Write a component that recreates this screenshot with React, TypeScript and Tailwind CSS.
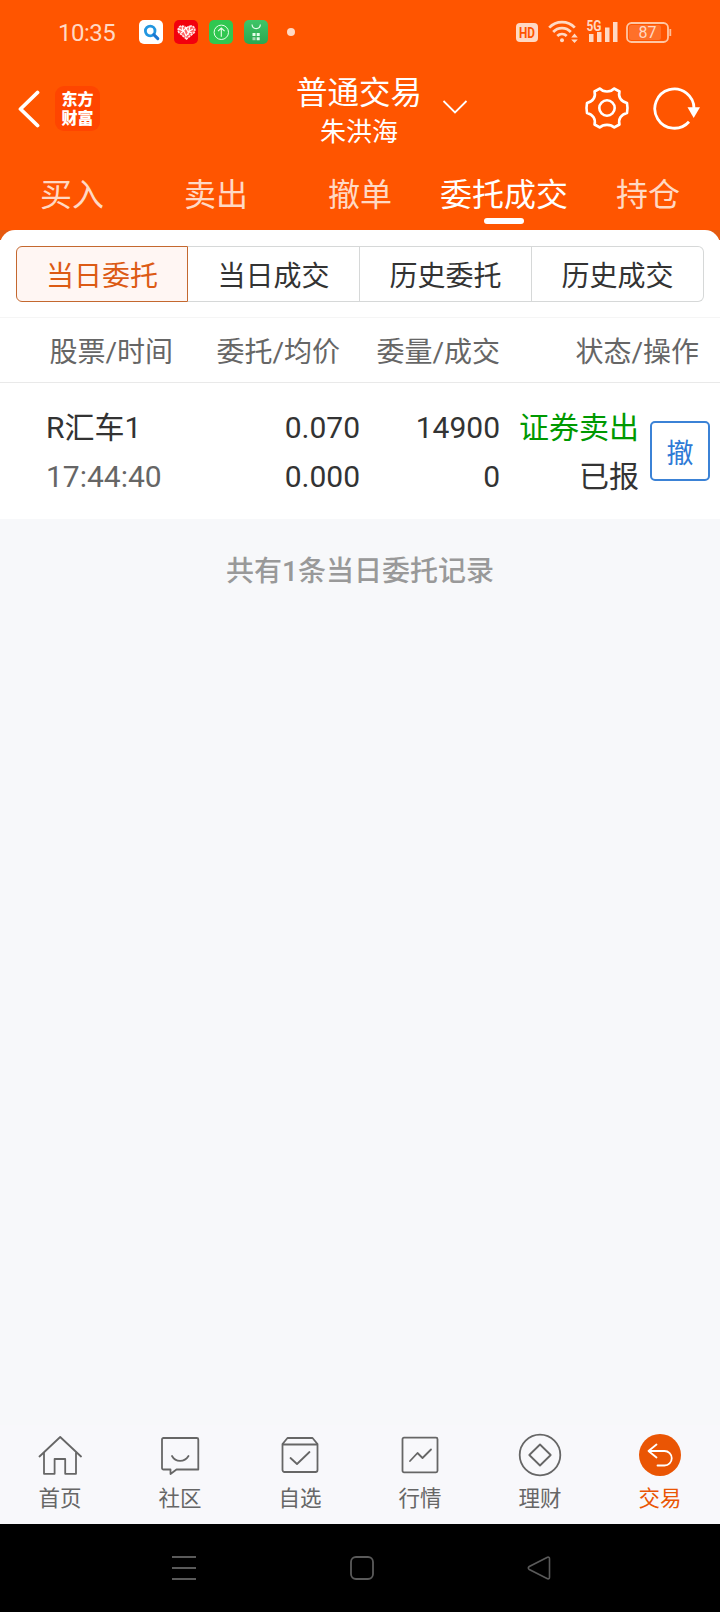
import { useState } from 'react';
import type { ReactNode } from 'react';
import clsx from 'clsx';

interface Order {
  name: string;
  time: string;
  price: string;
  avgPrice: string;
  amount: string;
  dealt: string;
  side: string;
  status: string;
}

const tabs = ['买入', '卖出', '撤单', '委托成交', '持仓'];
const segments = ['当日委托', '当日成交', '历史委托', '历史成交'];

const orders: Order[] = [
  {
    name: 'R汇车1',
    time: '17:44:40',
    price: '0.070',
    avgPrice: '0.000',
    amount: '14900',
    dealt: '0',
    side: '证券卖出',
    status: '已报'
  }
];

// 状态栏
const StatusBar = () => (
  <div className="flex h-16 items-center pl-[58px] pr-12 text-[#ffd9c4]">
    <span className="w-[81px] pt-0.5 text-[24px] leading-none tracking-[-0.5px]">10:35</span>
    <div className="flex items-center gap-[11px]">
      <svg className="size-6" viewBox="0 0 24 24" fill="none">
        <rect width="24" height="24" rx="5" fill="#fff" />
        <circle cx="11.2" cy="11" r="4.8" stroke="#2196e0" strokeWidth="2.8" />
        <path d="M14.8 14.6l4 4" stroke="#1b77d2" strokeWidth="3" strokeLinecap="round" />
      </svg>
      <svg className="size-6" viewBox="0 0 24 24" fill="none">
        <rect width="24" height="24" rx="5" fill="#f2000d" />
        <path
          d="M12.5 19L5 12.6C3 9.8 4.8 6 8 6c2 0 3.5 1 4.5 2.6C13.4 7 15 6 17 6c3.2 0 5 3.8 3 6.6z"
          fill="#f66"
          stroke="#ffe9e9"
          strokeWidth="1.6"
          strokeDasharray="2.4 .7"
        />
        <path d="M5 9l4 2 3-3 2 4 5-3M7 13l3-2 2 5 3-4 3 1M8 6l1 6M16 6l-2 9" stroke="#fff" strokeWidth="1.1" />
      </svg>
      <svg className="size-6" viewBox="0 0 24 24" fill="none" stroke="#eaffea">
        <rect width="24" height="24" rx="5" fill="#30c750" stroke="none" />
        <circle cx="12.3" cy="12.3" r="7.2" strokeWidth="1" />
        <path d="M12.3 16.8V8M9 11.2L12.3 8l3.3 3.2" strokeWidth="1.1" />
      </svg>
      <svg className="size-6" viewBox="0 0 24 24" fill="none">
        <defs>
          <linearGradient id="market" x1="0" y1="0" x2="0" y2="1">
            <stop stopColor="#3fc668" />
            <stop offset="1" stopColor="#2aa750" />
          </linearGradient>
        </defs>
        <rect width="24" height="24" rx="5" fill="url(#market)" />
        <path d="M8 4.5c.6 5.5 7.8 5.5 8.4 0" stroke="#e4ffe9" strokeWidth="1.2" />
        <path d="M8.5 13h3v3h-3zM12.7 13h3v3h-3zM12.7 17.2h3v3h-3z" fill="#e4ffe9" />
        <path d="M8.5 17.2h3v3h-3z" fill="#a9dcb6" />
      </svg>
    </div>
    <span className="ml-[19px] size-2 rounded-full bg-[#ffd9c4]" />

    <div className="ml-auto flex items-center">
      <svg className="h-7 w-[22px]" viewBox="0 -2 22 28">
        <rect y="3" width="22" height="19" rx="4" fill="#ffd9c4" />
        <text
          x="3"
          y="18"
          fontSize="15.5"
          fontWeight="700"
          fill="#ff5500"
          textLength="16"
          lengthAdjust="spacingAndGlyphs"
          fontFamily="Roboto, sans-serif"
        >
          HD
        </text>
      </svg>
      <svg className="ml-[10px] h-6 w-[30px]" viewBox="0 0 30 24" fill="none" stroke="#ffd9c4" strokeWidth="2.7">
        <path d="M1.2 7.7a17.5 17.5 0 0 1 25.6 0M5.2 12a12 12 0 0 1 17.6 0M9.3 16a6.5 6.5 0 0 1 9.4 0" />
        <circle cx="14" cy="20.3" r="2" fill="#ffd9c4" stroke="none" />
        <path d="M26.5 13.5l3.3 4h-6.6zM26.5 23l-3.3-3.5h6.6z" fill="#ffd9c4" stroke="none" />
      </svg>
      <svg className="ml-2 h-9 w-[33px]" viewBox="0 -6 33 36" fill="#ffd9c4">
        <text
          x="0.5"
          y="11"
          fontSize="14"
          fontWeight="700"
          textLength="15"
          lengthAdjust="spacingAndGlyphs"
          fontFamily="Roboto, sans-serif"
        >
          5G
        </text>
        <path d="M3 14h4.5v8H3zM11 12h4.5v10H11zM19 7.5h4.5V22H19zM27 2h4.5v20H27z" />
      </svg>
      <svg className="ml-[7px] h-6 w-[46px]" viewBox="0 0 46 24" fill="none">
        <rect x="1" y="3" width="41" height="19" rx="4.5" stroke="#ffc6a3" strokeWidth="1.8" />
        <rect x="3" y="5" width="32" height="15" rx="2.5" fill="#ff7029" />
        <path d="M44.3 9v7" stroke="#ffbe97" strokeWidth="1.8" />
        <text x="21.5" y="18" textAnchor="middle" fontSize="16" fill="#ffd9c4" fontFamily="Roboto, sans-serif">
          87
        </text>
      </svg>
    </div>
  </div>
);

// 标题栏
const TitleBar = () => (
  <div className="grid h-[88px] grid-cols-[1fr_auto_1fr] items-center pl-[17px] pr-[19px] text-white">
    <div className="flex items-center gap-[15px] pt-px">
      <svg className="h-10 w-[23px]" viewBox="0 0 23 40" fill="none" stroke="currentColor" strokeWidth="3.8">
        <path d="M20.5 3.5L3.5 20l17 16.5" strokeLinecap="round" strokeLinejoin="round" />
      </svg>
      <div className="flex size-[45px] flex-col items-center justify-center rounded-[9px] bg-[#ff4500] text-[16px] font-black leading-[19px]">
        <span>东方</span>
        <span>财富</span>
      </div>
    </div>
    <div className="pt-2 text-center">
      <div className="relative text-[31.5px] leading-10">
        普通交易
        <svg
          className="absolute left-[146px] top-[25px] h-4 w-[26px]"
          viewBox="0 0 26 16"
          fill="none"
          stroke="currentColor"
          strokeWidth="1.8"
        >
          <path d="M1.5 2L13 13.5 24.5 2" />
        </svg>
      </div>
      <div className="text-[26px] leading-9">朱洪海</div>
    </div>
    <div className="flex items-center justify-end gap-[23px]">
      <svg className="h-11 w-[46px]" viewBox="0 0 46 44" fill="none" stroke="currentColor" strokeWidth="2.6">
        <path
          d="M16 2.5C19 6.5 27 6.5 30 2.5L35.5 5.5C34 11 37 15.5 43 17Q44 22 43 27C37 28.5 34 33 35.5 38.5L30 41.5C27 38 19 38 16 41.5L10.5 38.5C12 33 9 28.5 3 27Q2 22 3 17C9 15.5 12 11 10.5 5.5Z"
          strokeLinejoin="round"
        />
        <circle cx="23" cy="22" r="7.7" />
      </svg>
      <svg className="h-11 w-12" viewBox="0 0 48 44" fill="none" stroke="currentColor" strokeWidth="2.8">
        <path d="M36 35.7A19.6 19.6 0 1 1 41 23" />
        <path d="M34.5 21.3H47L40.7 32z" fill="currentColor" stroke="none" />
      </svg>
    </div>
  </div>
);

interface NavIconProps {
  children: ReactNode;
}

const NavIcon = ({ children }: NavIconProps) => (
  <svg
    className="size-11"
    viewBox="0 0 44 44"
    fill="none"
    stroke="currentColor"
    strokeWidth="1.8"
    strokeLinejoin="round"
    strokeLinecap="round"
  >
    {children}
  </svg>
);

const navItems = [
  {
    label: '首页',
    icon: (
      <NavIcon>
        <path d="M1.5 23.5L22.2 4 43 23.5M6 19.5V40.8h10.6V26h10.6v14.8H38V19.5" />
      </NavIcon>
    )
  },
  {
    label: '社区',
    icon: (
      <NavIcon>
        <path d="M5.5 5h33.3a1.5 1.5 0 0 1 1.5 1.5V36.5H18.5L12.5 41v-4.5H5.5a1.5 1.5 0 0 1-1.5-1.5V6.5A1.5 1.5 0 0 1 5.5 5zM14 23c3.5 6.5 12.5 6.5 16.5 0" />
      </NavIcon>
    )
  },
  {
    label: '自选',
    icon: (
      <NavIcon>
        <path d="M4.5 11L9.5 5H34.5l5 6V37a2 2 0 0 1-2 2h-31a2 2 0 0 1-2-2zM4.5 11.5h35M12.5 25l6.500 6 12.5-12" />
      </NavIcon>
    )
  },
  {
    label: '行情',
    icon: (
      <NavIcon>
        <rect x="4.5" y="4.7" width="35" height="34.6" rx="1.5" />
        <path d="M12 28l7.5-8 5 5L33 16.5" />
      </NavIcon>
    )
  },
  {
    label: '理财',
    icon: (
      <NavIcon>
        <circle cx="22" cy="22" r="20.3" />
        <path d="M22 11.5L32.7 22 22 32.5 11.3 22z" />
      </NavIcon>
    )
  },
  {
    label: '交易',
    icon: (
      <NavIcon>
        <circle cx="22" cy="22" r="21" fill="#ea5504" stroke="none" />
        <path d="M18.5 11.5L10.5 18l8 6.5M11 18h15.5a7 7 0 0 1 0 14.5H19.5" stroke="#fff" />
      </NavIcon>
    )
  }
];

// 系统导航键
const SystemKeys = () => (
  <div className="flex h-[88px] items-center gap-[154px] bg-black pl-[172px] text-[#5a5a5a]">
    <svg className="size-6" viewBox="0 0 24 24" stroke="currentColor" strokeWidth="1.8">
      <path d="M0 1h24M0 12h24M0 23h24" />
    </svg>
    <svg className="size-6" viewBox="0 0 24 24" fill="none" stroke="currentColor" strokeWidth="1.8">
      <rect x="1" y="1" width="22" height="22" rx="5" />
    </svg>
    <svg className="-ml-px size-6" viewBox="0 0 24 24" fill="none" stroke="currentColor" strokeWidth="1.6">
      <path d="M20.5 1.2L2.3 10.5q-2 1.5 0 3L20.5 22.8q2 .5 2-1.5V2.7q0-2-2-1.5z" />
    </svg>
  </div>
);

const App = () => {
  const [activeTab, setActiveTab] = useState(3);
  const [activeSegment, setActiveSegment] = useState(0);

  return (
    <div className="flex h-[1612px] w-[720px] flex-col overflow-hidden bg-[#f7f8fa] font-[Roboto,'Noto_Sans_CJK_SC',sans-serif] text-[#333]">
      <header className="bg-[#ff5500]">
        <StatusBar />
        <TitleBar />
        <nav className="grid h-[78px] grid-cols-5">
          {tabs.map((tab, i) => (
            <button
              key={tab}
              onClick={() => setActiveTab(i)}
              className={clsx(
                'flex flex-col items-center whitespace-nowrap pt-[23px] text-[32px] leading-10',
                i === activeTab ? 'text-white' : 'text-[#ffd9c4]'
              )}
            >
              {tab}
              {i === activeTab && <span className="mt-[3px] h-[6px] w-10 rounded-[3px] bg-white" />}
            </button>
          ))}
        </nav>
      </header>

      <main className="flex-1">
        <div className="bg-[linear-gradient(#e5590f_10px,#fff_10px)]">
          <div className="rounded-t-[15px] bg-white px-4 pb-[15px] pt-4">
            <div className="grid h-14 grid-cols-4">
              {segments.map((segment, i) => (
                <button
                  key={segment}
                  onClick={() => setActiveSegment(i)}
                  className={clsx(
                    'border pt-1.5 text-[28px] leading-none first:rounded-l-[6px] last:rounded-r-[6px]',
                    i === activeSegment ? 'border-[#c4682f] bg-[#fff6f3] text-[#dc5a14]' : 'border-[#d6d8d8]',
                    i !== activeSegment && i > 0 && 'border-l-0'
                  )}
                >
                  {segment}
                </button>
              ))}
            </div>
          </div>
        </div>

        <div className="grid h-[66px] grid-cols-[173px_167px_160px_199px] items-center border-y border-t-[#f5f5f5] border-b-[#e9e9e9] bg-white pt-1.5 text-right text-[28px] text-[#666]">
          <span>股票/时间</span>
          <span>委托/均价</span>
          <span>委量/成交</span>
          <span>状态/操作</span>
        </div>

        {orders.map(order => (
          <div
            key={order.time}
            className="flex h-[136px] items-center bg-white pl-[46px] pr-[10px] pt-0.5 text-[30px] leading-[49px]"
          >
            <div className="w-[174px]">
              <div>{order.name}</div>
              <div className="text-[#666]">{order.time}</div>
            </div>
            <div className="w-[140px] text-right">
              <div>{order.price}</div>
              <div>{order.avgPrice}</div>
            </div>
            <div className="w-[140px] text-right">
              <div>{order.amount}</div>
              <div>{order.dealt}</div>
            </div>
            <div className="w-[139px] text-right">
              <div className="text-[#009900]">{order.side}</div>
              <div>{order.status}</div>
            </div>
            <button className="mb-0.5 ml-auto size-[60px] rounded-[5px] border-2 border-[#3b82d6] pt-1.5 text-[27px] leading-none text-[#2f7ad6]">
              撤
            </button>
          </div>
        ))}

        <p className="pt-[33px] text-center text-[28px] font-medium leading-10 text-[#999]">
          共有{orders.length}条当日委托记录
        </p>
      </main>

      <footer>
        <nav className="grid h-[99px] grid-cols-6 bg-[#f8f8fb]">
          {navItems.map((item, i) => (
            <div
              key={item.label}
              className={clsx('flex flex-col items-center pt-2', i === 5 ? 'text-[#ea5504]' : 'text-[#666]')}
            >
              {item.icon}
              <span className="mt-[6px] text-[21.5px] leading-8">{item.label}</span>
            </div>
          ))}
        </nav>
        <SystemKeys />
      </footer>
    </div>
  );
};

export default App;
